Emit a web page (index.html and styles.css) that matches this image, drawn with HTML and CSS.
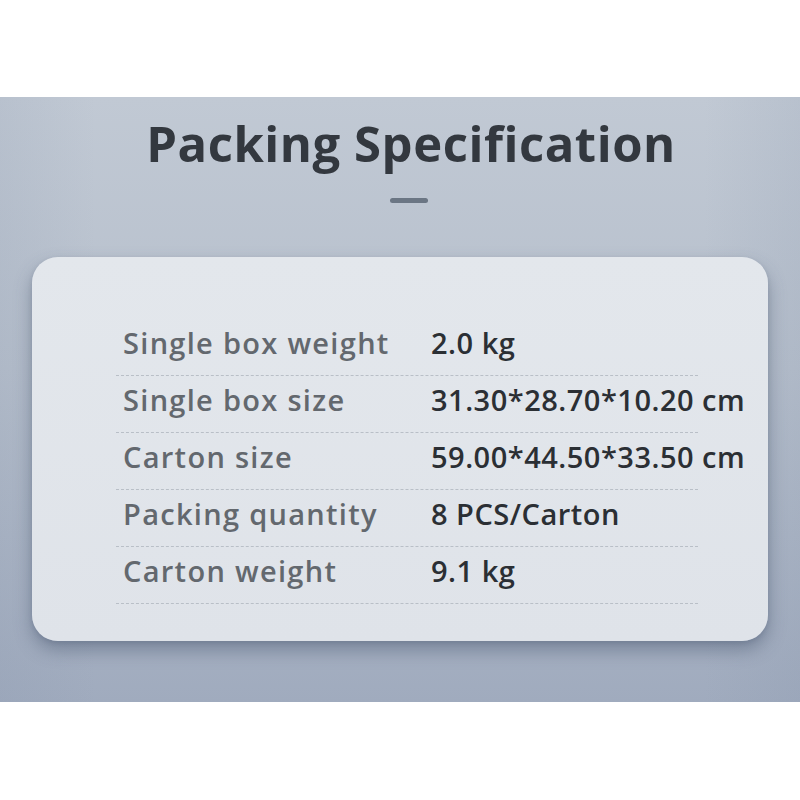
FILE: index.html
```html
<!DOCTYPE html>
<html lang="en">
<head>
<meta charset="utf-8">
<title>Packing Specification</title>
<link rel="stylesheet" href="styles.css">
</head>
<body>
<section class="panel">
  <h1 class="title">Packing Specification</h1>
  <div class="dash"></div>
  <div class="card">
    <div class="row"><span class="label">Single box weight</span><span class="value">2.0 kg</span></div>
    <div class="row"><span class="label">Single box size</span><span class="value">31.30*28.70*10.20 cm</span></div>
    <div class="row"><span class="label">Carton size</span><span class="value">59.00*44.50*33.50 cm</span></div>
    <div class="row"><span class="label">Packing quantity</span><span class="value">8 PCS/Carton</span></div>
    <div class="row"><span class="label">Carton weight</span><span class="value">9.1 kg</span></div>
  </div>
</section>
</body>
</html>
```

FILE: styles.css
```css
html, body {
  margin: 0;
  padding: 0;
  background: #ffffff;
}
body {
  font-family: "Open Sans", "Noto Sans", sans-serif;
}
.panel {
  margin-top: 97px;
  height: 605px;
  box-sizing: border-box;
  padding-top: 18px;
  display: flex;
  flex-direction: column;
  align-items: center;
  background:
    linear-gradient(90deg, rgba(120,135,160,0.12) 0%, rgba(255,255,255,0) 12%, rgba(255,255,255,0) 88%, rgba(120,135,160,0.12) 100%),
    linear-gradient(180deg, #c1c9d4 0%, #b6bfcc 45%, #a0abbe 100%);
}
.title {
  margin: 0;
  padding-left: 22px;
  font-size: 49px;
  line-height: 56px;
  letter-spacing: 0.55px;
  font-weight: 700;
  color: #33383f;
  text-align: center;
}
.dash {
  margin-top: 27px;
  margin-left: 18px;
  width: 38px;
  height: 5px;
  border-radius: 3px;
  background: #6b7684;
}
.card {
  margin-top: 54px;
  width: 736px;
  box-sizing: border-box;
  padding: 62px 70px 37px 84px;
  border-radius: 26px;
  background: linear-gradient(180deg, #e3e7ec 0%, #dfe3e9 100%);
  box-shadow: 0 9px 18px rgba(55, 70, 95, 0.4), 0 2px 4px rgba(60, 75, 100, 0.15);
}
.row {
  display: flex;
  width: 582px;
  height: 57px;
  box-sizing: border-box;
  padding: 0 0 9px 7px;
  border-bottom: 1px dashed #b9bfc7;
  line-height: 48px;
  font-size: 29px;
  white-space: nowrap;
}
.label {
  width: 308px;
  flex: none;
  font-weight: 600;
  letter-spacing: 1.3px;
  color: #63686e;
}
.value {
  font-weight: 600;
  letter-spacing: 0.5px;
  color: #2b2f34;
}
```
